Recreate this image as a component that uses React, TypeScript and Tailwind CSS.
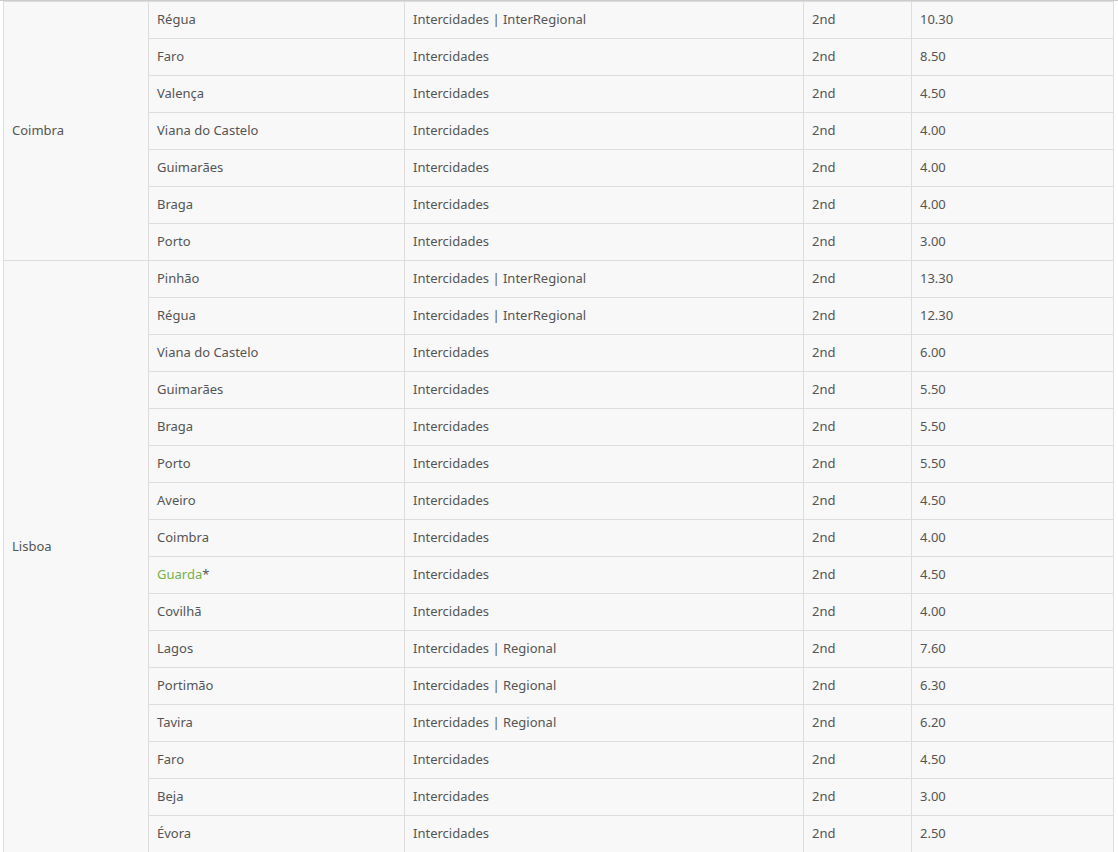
type Row = { to: string; service: string; cls: string; price: string; link?: boolean };

const groups: { from: string; rows: Row[]; extra?: string }[] = [
  {
    from: "Coimbra",
    rows: [
      { to: "Régua", service: "Intercidades | InterRegional", cls: "2nd", price: "10.30" },
      { to: "Faro", service: "Intercidades", cls: "2nd", price: "8.50" },
      { to: "Valença", service: "Intercidades", cls: "2nd", price: "4.50" },
      { to: "Viana do Castelo", service: "Intercidades", cls: "2nd", price: "4.00" },
      { to: "Guimarães", service: "Intercidades", cls: "2nd", price: "4.00" },
      { to: "Braga", service: "Intercidades", cls: "2nd", price: "4.00" },
      { to: "Porto", service: "Intercidades", cls: "2nd", price: "3.00" },
    ],
  },
  {
    from: "Lisboa",
    extra: "pb-[20px]",
    rows: [
      { to: "Pinhão", service: "Intercidades | InterRegional", cls: "2nd", price: "13.30" },
      { to: "Régua", service: "Intercidades | InterRegional", cls: "2nd", price: "12.30" },
      { to: "Viana do Castelo", service: "Intercidades", cls: "2nd", price: "6.00" },
      { to: "Guimarães", service: "Intercidades", cls: "2nd", price: "5.50" },
      { to: "Braga", service: "Intercidades", cls: "2nd", price: "5.50" },
      { to: "Porto", service: "Intercidades", cls: "2nd", price: "5.50" },
      { to: "Aveiro", service: "Intercidades", cls: "2nd", price: "4.50" },
      { to: "Coimbra", service: "Intercidades", cls: "2nd", price: "4.00" },
      { to: "Guarda", service: "Intercidades", cls: "2nd", price: "4.50", link: true },
      { to: "Covilhã", service: "Intercidades", cls: "2nd", price: "4.00" },
      { to: "Lagos", service: "Intercidades | Regional", cls: "2nd", price: "7.60" },
      { to: "Portimão", service: "Intercidades | Regional", cls: "2nd", price: "6.30" },
      { to: "Tavira", service: "Intercidades | Regional", cls: "2nd", price: "6.20" },
      { to: "Faro", service: "Intercidades", cls: "2nd", price: "4.50" },
      { to: "Beja", service: "Intercidades", cls: "2nd", price: "3.00" },
      { to: "Évora", service: "Intercidades", cls: "2nd", price: "2.50" },
    ],
  },
];

const cell = "border border-[#dddddd] px-[8px] h-[37px] align-middle";

export default function App() {
  return (
    <div className="w-[1118px] h-[852px] overflow-hidden bg-white border-t border-[#cccccc] font-['Noto_Sans',sans-serif] text-[13px] text-[#555555]">
      <div className="pl-[3px]">
        <table className="w-[1110px] table-fixed border-collapse bg-[#f8f8f8]">
          <colgroup>
            <col className="w-[145px]" />
            <col className="w-[256px]" />
            <col className="w-[399px]" />
            <col className="w-[108px]" />
            <col className="w-[202px]" />
          </colgroup>
          <tbody>
            {groups.map((g) =>
              g.rows.map((r, i) => (
                <tr key={g.from + r.to + i}>
                  {i === 0 && (
                    <td rowSpan={g.rows.length} className={`${cell} ${g.extra ?? ""}`}>
                      {g.from}
                    </td>
                  )}
                  <td className={cell}>
                    {r.link ? (
                      <>
                        <span className="text-[#76b051]">{r.to}</span>*
                      </>
                    ) : (
                      r.to
                    )}
                  </td>
                  <td className={cell}>{r.service}</td>
                  <td className={cell}>{r.cls}</td>
                  <td className={cell}>{r.price}</td>
                </tr>
              ))
            )}
          </tbody>
        </table>
      </div>
    </div>
  );
}
